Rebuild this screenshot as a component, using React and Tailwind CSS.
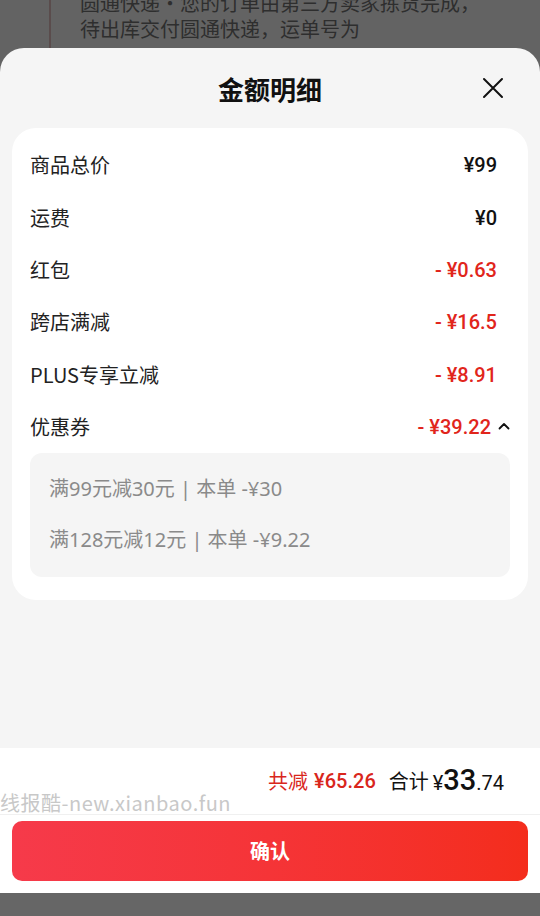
import React from 'react';

const cjk = { fontFamily: '"Noto Sans CJK SC", "Noto Sans", sans-serif' };
const num = { fontFamily: 'Roboto, "Noto Sans CJK SC", sans-serif' };
const wide = { fontFamily: '"Noto Sans", "Noto Sans CJK SC", sans-serif' };

const rows = [
  { label: '商品总价', value: '¥99', red: false },
  { label: '运费', value: '¥0', red: false },
  { label: '红包', value: '- ¥0.63', red: true },
  { label: '跨店满减', value: '- ¥16.5', red: true },
  { label: 'PLUS专享立减', value: '- ¥8.91', red: true },
];

const coupons = ['满99元减30元 | 本单 -¥30', '满128元减12元 | 本单 -¥9.22'];

function Row({ label, value, red }) {
  return (
    <div className="h-[52.4px] flex items-center justify-between pr-[13px]">
      <span className="text-[20px] text-[#222]" style={cjk}>{label}</span>
      <span className={`text-[20px] font-medium ${red ? 'text-[#e1251b]' : 'text-[#111]'}`} style={num}>
        {value}
      </span>
    </div>
  );
}

export default function App() {
  return (
    <div className="w-[540px] h-[916px] bg-[#636363] flex flex-col overflow-hidden relative" style={cjk}>
      {/* dimmed page behind */}
      <div className="h-[48px] shrink-0 relative overflow-hidden">
        <div className="absolute left-[49px] top-0 bottom-0 w-[2px] bg-[#5a4c4c]" />
        <div className="pl-[80px] mt-[-10px] text-[20px] leading-[26px] text-[#2e2e2e]">
          <div>圆通快递·您的订单由第三方卖家拣货完成，</div>
          <div>待出库交付圆通快递，运单号为</div>
        </div>
      </div>

      {/* sheet */}
      <div className="flex-1 flex flex-col bg-[#f5f5f5] rounded-t-[24px] overflow-hidden">
        <div className="h-[80px] shrink-0 relative flex items-center justify-center">
          <span className="text-[26px] font-bold text-[#111]">金额明细</span>
          <svg className="absolute left-[482px] top-[29px]" width="22" height="22" viewBox="0 0 22 22">
            <path d="M2 2 L20 20 M20 2 L2 20" stroke="#111" strokeWidth="2" strokeLinecap="round" />
          </svg>
        </div>

        <div className="mx-[12px] bg-white rounded-[24px] pt-[11px] pb-[23px] px-[18px]">
          {rows.map((r) => (
            <Row key={r.label} {...r} />
          ))}
          <div className="h-[52.4px] flex items-center justify-between">
            <span className="text-[20px] text-[#222]">优惠券</span>
            <div className="flex items-center gap-[7px]">
              <span className="text-[20px] font-medium text-[#e1251b]" style={num}>- ¥39.22</span>
              <svg width="12" height="8" viewBox="0 0 12 8" className="mt-[-2px]">
                <path d="M1.5 6.5 L6 2 L10.5 6.5" stroke="#111" strokeWidth="1.8" fill="none" strokeLinecap="round" strokeLinejoin="round" />
              </svg>
            </div>
          </div>
          <div className="bg-[#f5f5f5] rounded-[12px] pt-[10px] pb-[12px] pl-[19px]">
            {coupons.map((c) => (
              <div key={c} className="h-[51px] flex items-center text-[20px] text-[#8a8a8a]" style={wide}>
                {c}
              </div>
            ))}
          </div>
        </div>

        <div className="flex-1" />

        <div className="h-[145px] shrink-0 bg-white relative flex flex-col">
          <div className="h-[67px] flex items-center justify-end pr-[36px] border-b border-[#f0f0f0]">
            <span className="text-[20px] text-[#d9261c]">共减</span>
            <span className="text-[20px] font-medium text-[#d9261c] ml-[6px]" style={num}>¥65.26</span>
            <span className="text-[20px] text-[#111] ml-[13px]">合计</span>
            <span className="text-[#111] ml-[4px] flex items-baseline" style={num}>
              <span className="text-[20px]">¥</span>
              <span className="text-[29px] font-medium">33</span>
              <span className="text-[20px]">.74</span>
            </span>
          </div>
          <div className="absolute left-0 top-[42px] text-[20px] tracking-[0.5px] text-[#c8c8c8] leading-[26px]" style={cjk}>
            线报酷-new.xianbao.fun
          </div>
          <div className="px-[12px] pt-[6px]">
            <button className="w-full h-[60px] rounded-[10px] bg-linear-to-r from-[#f63a4a] to-[#f42d1c] text-white text-[20px] font-bold">
              确认
            </button>
          </div>
        </div>
      </div>
      <div className="h-[23px] shrink-0 bg-[#666]" />
    </div>
  );
}
